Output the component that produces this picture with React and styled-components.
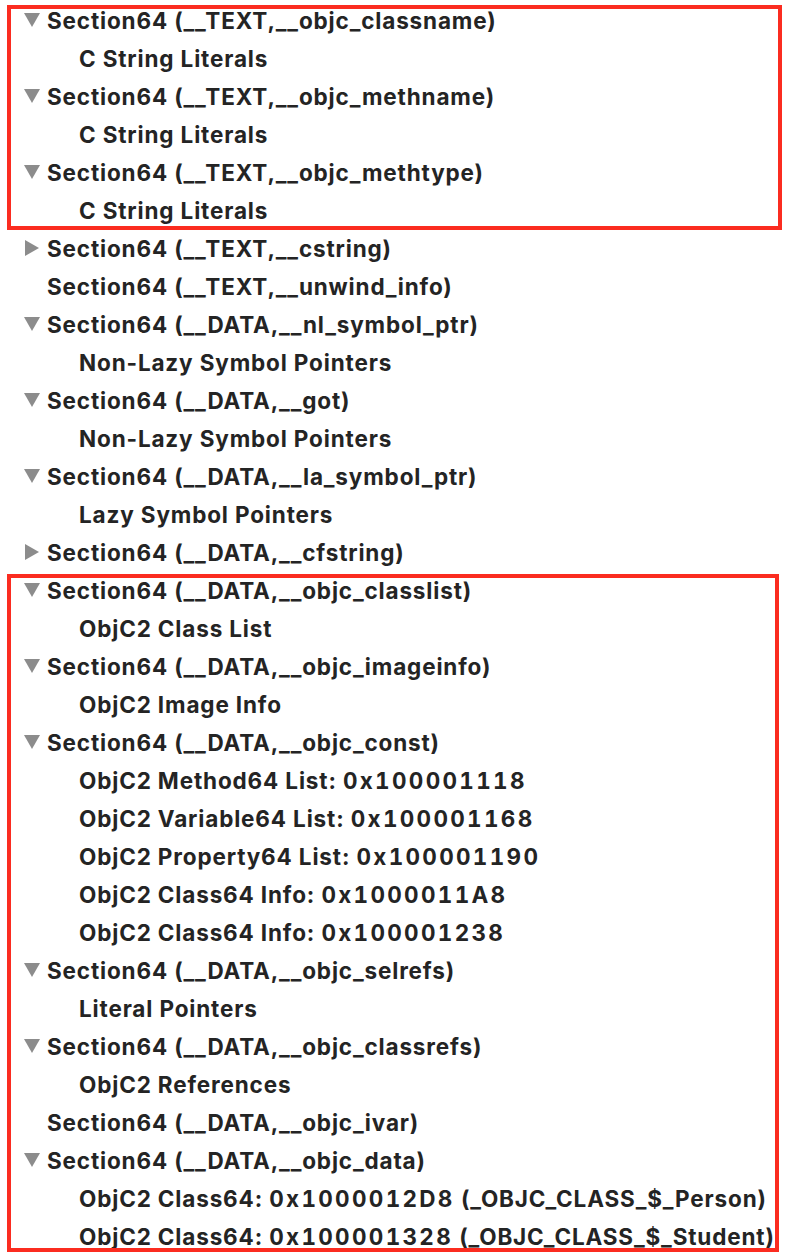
import React from "react";
import styled, { createGlobalStyle } from "styled-components";

const GlobalStyle = createGlobalStyle`
  html, body {
    margin: 0;
    padding: 0;
    background: #ffffff;
  }
  body {
    font-family: Inter, "Liberation Sans", sans-serif;
  }
`;

// 트리 전체
const Tree = styled.div`
  width: 788px;
  padding-top: 1px;
  display: flex;
  flex-direction: column;
`;

// 빨간 박스로 강조된 묶음
const Group = styled.div`
  position: relative;
  display: flex;
  flex-direction: column;

  ${(p) =>
    p.$mark &&
    `
    &::after {
      content: "";
      position: absolute;
      top: ${p.$mark.top}px;
      bottom: ${p.$mark.bottom}px;
      left: 7px;
      right: ${p.$mark.right}px;
      border: 4px solid #fb2c20;
      pointer-events: none;
    }
  `}
`;

const Row = styled.div`
  height: 38px;
  display: flex;
  align-items: center;
  padding-left: ${(p) => (p.$level === 1 ? 79 : 47)}px;
  position: relative;
  white-space: nowrap;
`;

const Toggle = styled.span`
  position: absolute;
  left: 24px;
  top: 11px;
  width: 16px;
  height: 16px;
  display: flex;
  align-items: center;
  justify-content: center;
`;

const Label = styled.span`
  font-size: 22.5px;
  font-weight: 700;
  color: #242424;
  letter-spacing: 0.85px;
  white-space: pre;
`;

// 주소값 (숫자 폭 고정)
const Hex = styled.span`
  font-variant-numeric: tabular-nums;
  letter-spacing: 2.3px;
`;

const Arrow = ({ open }) =>
  open ? (
    <svg width="16" height="16" viewBox="0 0 16 16">
      <polygon points="0,1 16,1 8,15" fill="#8c8c8c" />
    </svg>
  ) : (
    <svg width="16" height="16" viewBox="0 0 16 16">
      <polygon points="1,0 15,8 1,16" fill="#8c8c8c" />
    </svg>
  );

const groups = [
  {
    mark: { top: 4, bottom: -1, right: 6 },
    rows: [
      { t: "Section64 (__TEXT,__objc_classname)", open: true },
      { t: "C String Literals", level: 1 },
      { t: "Section64 (__TEXT,__objc_methname)", open: true },
      { t: "C String Literals", level: 1 },
      { t: "Section64 (__TEXT,__objc_methtype)", open: true },
      { t: "C String Literals", level: 1 },
    ],
  },
  {
    mark: null,
    rows: [
      { t: "Section64 (__TEXT,__cstring)", open: false },
      { t: "Section64 (__TEXT,__unwind_info)" },
      { t: "Section64 (__DATA,__nl_symbol_ptr)", open: true },
      { t: "Non-Lazy Symbol Pointers", level: 1 },
      { t: "Section64 (__DATA,__got)", open: true },
      { t: "Non-Lazy Symbol Pointers", level: 1 },
      { t: "Section64 (__DATA,__la_symbol_ptr)", open: true },
      { t: "Lazy Symbol Pointers", level: 1 },
      { t: "Section64 (__DATA,__cfstring)", open: false },
    ],
  },
  {
    mark: { top: 3, bottom: 3, right: 9 },
    rows: [
      { t: "Section64 (__DATA,__objc_classlist)", open: true },
      { t: "ObjC2 Class List", level: 1 },
      { t: "Section64 (__DATA,__objc_imageinfo)", open: true },
      { t: "ObjC2 Image Info", level: 1 },
      { t: "Section64 (__DATA,__objc_const)", open: true },
      { t: "ObjC2 Method64 List: ", hex: "0x100001118", level: 1 },
      { t: "ObjC2 Variable64 List: ", hex: "0x100001168", level: 1 },
      { t: "ObjC2 Property64 List: ", hex: "0x100001190", level: 1 },
      { t: "ObjC2 Class64 Info: ", hex: "0x1000011A8", level: 1 },
      { t: "ObjC2 Class64 Info: ", hex: "0x100001238", level: 1 },
      { t: "Section64 (__DATA,__objc_selrefs)", open: true },
      { t: "Literal Pointers", level: 1 },
      { t: "Section64 (__DATA,__objc_classrefs)", open: true },
      { t: "ObjC2 References", level: 1 },
      { t: "Section64 (__DATA,__objc_ivar)" },
      { t: "Section64 (__DATA,__objc_data)", open: true },
      { t: "ObjC2 Class64: ", hex: "0x1000012D8", tail: " (_OBJC_CLASS_$_Person)", level: 1 },
      { t: "ObjC2 Class64: ", hex: "0x100001328", tail: " (_OBJC_CLASS_$_Student)", level: 1 },
    ],
  },
];

export default function App() {
  return (
    <>
      <GlobalStyle />
      <Tree>
        {groups.map((g, gi) => (
          <Group key={gi} $mark={g.mark}>
            {g.rows.map((r, ri) => (
              <Row key={ri} $level={r.level || 0}>
                {r.open !== undefined && (
                  <Toggle>
                    <Arrow open={r.open} />
                  </Toggle>
                )}
                <Label>
                  {r.t}
                  {r.hex && <Hex>{r.hex}</Hex>}
                  {r.tail}
                </Label>
              </Row>
            ))}
          </Group>
        ))}
      </Tree>
    </>
  );
}
